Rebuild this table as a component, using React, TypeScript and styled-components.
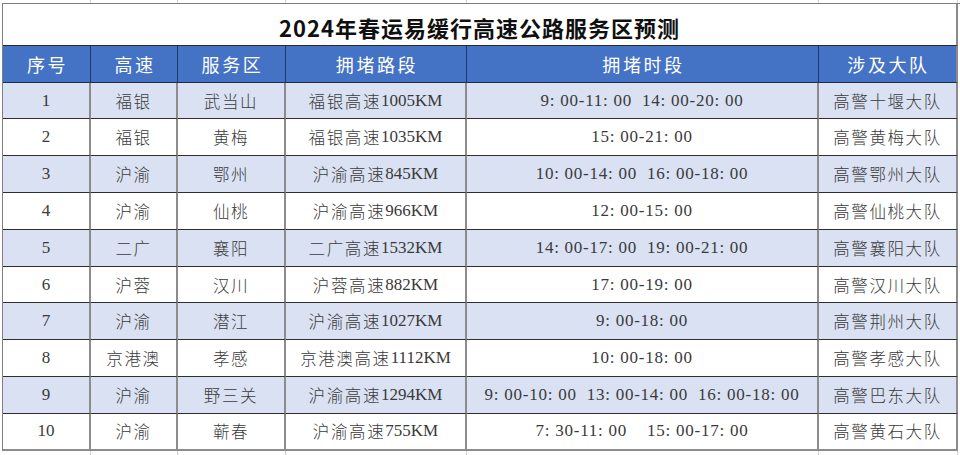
import React from "react";
import styled, { createGlobalStyle } from "styled-components";

const GlobalStyle = createGlobalStyle`
  html, body { margin: 0; padding: 0; background: #ffffff; }
  body { width: 960px; height: 455px; overflow: hidden; }
`;

const COLS = "88px 87px 108px 181px 352px 139px";

const Page = styled.div`
  width: 960px;
  height: 455px;
  padding-left: 2px;
  box-sizing: border-box;
  display: flex;
  flex-direction: column;
`;

const Strip = styled.div<{ $h: number }>`
  display: grid;
  grid-template-columns: ${COLS};
  height: ${(p) => p.$h}px;
  padding-left: 1px;
`;

const StripCell = styled.div`
  border-right: 1px solid #d0d0d0;
`;

const Table = styled.div`
  display: grid;
  grid-template-columns: ${COLS};
  border-left: 1px solid #7f7f7f;
  border-top: 1px solid #7f7f7f;
`;

const Title = styled.div`
  grid-column: 1 / -1;
  height: 42px;
  box-sizing: border-box;
  border-right: 2px solid #8a8a8a;
  border-bottom: 1px solid #2a2a2a;
  display: flex;
  align-items: center;
  justify-content: center;
  padding-top: 5px;
  font-family: "Noto Sans CJK SC", "Noto Sans", sans-serif;
  font-weight: 700;
  font-size: 22px;
  letter-spacing: 1px;
  color: #101010;
`;

const HeadCell = styled.div<{ $lastCol?: boolean }>`
  height: 37px;
  box-sizing: border-box;
  background: #4472c4;
  border-right: ${(p) => (p.$lastCol ? "2px solid #8a8a8a" : "1.5px solid #1f3864")};
  border-bottom: 1px solid #1f2a44;
  display: flex;
  align-items: center;
  justify-content: center;
  font-family: "Liberation Serif", "Noto Sans CJK SC", serif;
  font-size: 18px;
  letter-spacing: 2.6px;
  color: #ffffff;
  padding-left: 2px;
`;

const Cell = styled.div<{ $alt: boolean; $last: boolean; $wide: boolean }>`
  height: 36.8px;
  box-sizing: border-box;
  background: ${(p) => (p.$alt ? "#d9e1f2" : "#ffffff")};
  border-right: 2px solid #8c8c8c;
  border-bottom: ${(p) => (p.$last ? "2px solid #8c8c8c" : "1px solid #2e2e2e")};
  display: flex;
  align-items: center;
  justify-content: center;
  font-family: "Liberation Serif", "Noto Sans CJK SC", serif;
  font-size: 17px;
  font-weight: 300;
  color: #3a3a3a;
  white-space: pre;
  letter-spacing: ${(p) => (p.$wide ? "0.75px" : "0px")};
`;

const Han = styled.span`
  font-family: "Noto Sans CJK SC", sans-serif;
  font-size: 16.5px;
  font-weight: 300;
  letter-spacing: 1.6px;
`;

const headers = ["序号", "高速", "服务区", "拥堵路段", "拥堵时段", "涉及大队"];

const rows: string[][] = [
  ["1", "福银", "武当山", "福银高速1005KM", "9: 00-11: 00  14: 00-20: 00", "高警十堰大队"],
  ["2", "福银", "黄梅", "福银高速1035KM", "15: 00-21: 00", "高警黄梅大队"],
  ["3", "沪渝", "鄂州", "沪渝高速845KM", "10: 00-14: 00  16: 00-18: 00", "高警鄂州大队"],
  ["4", "沪渝", "仙桃", "沪渝高速966KM", "12: 00-15: 00", "高警仙桃大队"],
  ["5", "二广", "襄阳", "二广高速1532KM", "14: 00-17: 00  19: 00-21: 00", "高警襄阳大队"],
  ["6", "沪蓉", "汉川", "沪蓉高速882KM", "17: 00-19: 00", "高警汉川大队"],
  ["7", "沪渝", "潜江", "沪渝高速1027KM", "9: 00-18: 00", "高警荆州大队"],
  ["8", "京港澳", "孝感", "京港澳高速1112KM", "10: 00-18: 00", "高警孝感大队"],
  ["9", "沪渝", "野三关", "沪渝高速1294KM", "9: 00-10: 00  13: 00-14: 00  16: 00-18: 00", "高警巴东大队"],
  ["10", "沪渝", "蕲春", "沪渝高速755KM", "7: 30-11: 00    15: 00-17: 00", "高警黄石大队"],
];

function renderText(text: string) {
  const parts = text.match(/[\u4e00-\u9fff]+|[^\u4e00-\u9fff]+/g) || [];
  return parts.map((p, i) =>
    /[\u4e00-\u9fff]/.test(p) ? <Han key={i}>{p}</Han> : <span key={i}>{p}</span>
  );
}

export default function App() {
  return (
    <>
      <GlobalStyle />
      <Page>
        <Strip $h={3}>
          {headers.map((h) => (
            <StripCell key={h} />
          ))}
        </Strip>
        <Table>
          <Title>2024年春运易缓行高速公路服务区预测</Title>
          {headers.map((h, i) => (
            <HeadCell key={h} $lastCol={i === headers.length - 1}>
              {h}
            </HeadCell>
          ))}
          {rows.map((r, ri) =>
            r.map((c, ci) => (
              <Cell
                key={`${ri}-${ci}`}
                $alt={ri % 2 === 0}
                $last={ri === rows.length - 1}
                $wide={ci === 4}
              >
                {renderText(c)}
              </Cell>
            ))
          )}
        </Table>
        <Strip $h={5}>
          {headers.map((h) => (
            <StripCell key={h} />
          ))}
        </Strip>
      </Page>
    </>
  );
}
